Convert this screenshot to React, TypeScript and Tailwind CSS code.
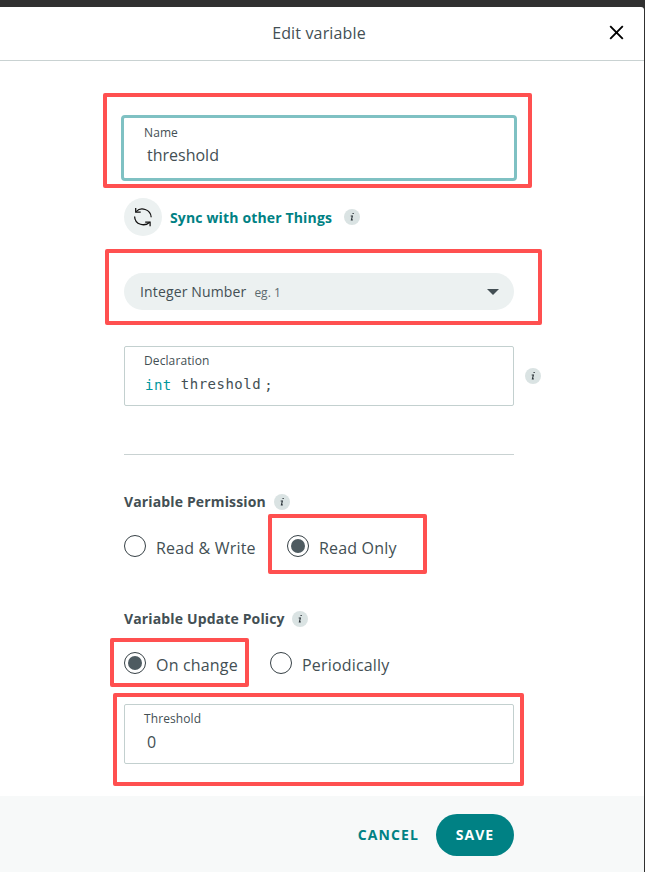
import React from "react";

function Info() {
  return (
    <span className="flex h-4 w-4 shrink-0 items-center justify-center rounded-full bg-[#dae3e3]">
      <svg width="16" height="16" viewBox="0 0 16 16" fill="none" stroke="#2c353a">
        <path d="M8.5 4.5h1.3" strokeWidth="1.1" />
        <path d="M6.7 7h1.7L7.4 10.9h1.4" strokeWidth="1.1" />
      </svg>
    </span>
  );
}

function Radio({ label, checked, className }: { label: string; checked?: boolean; className: string }) {
  return (
    <label className={"flex items-start whitespace-nowrap " + className}>
      <span className="flex h-[22px] w-[22px] shrink-0 items-center justify-center rounded-full border border-[#374146] bg-white">
        {checked && <span className="h-3.5 w-3.5 rounded-full bg-[#4e5b61]" />}
      </span>
      <span className="ml-2.5 mt-0.5 text-base leading-[22px] tracking-[0.18px]">{label}</span>
    </label>
  );
}

function Highlight({ className }: { className: string }) {
  return <div className={"pointer-events-none absolute rounded-[2px] border-4 border-[#ff5050] " + className} />;
}

export default function App() {
  return (
    <div className="relative flex h-[872px] w-[645px] flex-col overflow-hidden bg-[#303030] pr-px pt-[7px] font-['Open_Sans','Noto_Sans',sans-serif] text-[#434f54]">
      <div className="flex min-h-0 flex-1 flex-col overflow-hidden rounded-tr-[3px] bg-white">
        <header className="grid h-[54px] shrink-0 grid-cols-[1fr_auto_1fr] items-center border-b border-[#c9d2d2] pr-5">
          <span />
          <h1 className="mb-0.5 ml-[14px] whitespace-nowrap text-base tracking-[0.15px]">Edit variable</h1>
          <svg className="mb-0.5 justify-self-end" width="15" height="15" viewBox="0 0 15 15" fill="none" stroke="#000" strokeWidth="1.9">
            <path d="M1.2 1.2 13.8 13.8M13.8 1.2 1.2 13.8" />
          </svg>
        </header>

        <main className="flex h-[735px] shrink-0 flex-col pl-[124px]">
          <div className="-ml-[3px] mt-[54px] flex h-[66px] w-[396px] shrink-0 flex-col rounded-[4px] border-[3px] border-[#7fc1c3] pl-5 pt-[7px]">
            <span className="text-xs leading-4 tracking-[0.1px]">Name</span>
            <span className="ml-[3px] mt-0.5 text-base leading-6">threshold</span>
          </div>

          <div className="mt-[17px] flex h-[38px] shrink-0 items-center">
            <span className="flex h-[38px] w-[38px] items-center justify-center rounded-full bg-[#ecf1f1]">
              <svg width="20" height="20" viewBox="0 0 20 20" fill="none" stroke="#111" strokeWidth="1.25">
                <path d="M3.2 4.6C7.8 -0.4 17.6 2.2 18.2 10.2" />
                <path d="M2.7 0.9v4.1h5" />
                <path d="M1.6 9.4c.3 8.6 10.3 10.4 15.2 5.8" />
                <path d="M12.2 15.2h4.9v4.1" />
              </svg>
            </span>
            <span className="ml-2 mt-0.5 w-[174px] whitespace-nowrap text-sm font-bold tracking-[0.15px] text-[#008184]">Sync with other Things</span>
            <Info />
          </div>

          <div className="mt-[37px] flex h-[37px] w-[390px] shrink-0 items-center rounded-full bg-[#ecf1f1] pl-4 pr-[15px]">
            <span className="whitespace-nowrap text-sm tracking-[0.14px]">Integer Number</span>
            <span className="ml-2 mt-0.5 flex-1 text-xs text-[#5d6a6f]">eg. 1</span>
            <svg width="12" height="6" viewBox="0 0 12 6" fill="#434f54">
              <path d="M0 0h12L6 6z" />
            </svg>
          </div>

          <div className="mt-9 flex items-center">
            <div className="flex h-[60px] w-[390px] shrink-0 flex-col rounded-[2px] border border-[#c3d0cf] pl-[19px] pt-[5px]">
              <span className="text-xs leading-[18px] tracking-[0.1px]">Declaration</span>
              <span className="ml-px mt-1 flex whitespace-pre font-['DejaVu_Sans_Mono',monospace] text-sm leading-5 tracking-[0.5px]">
                <span className="mt-px text-[#00979d]">int</span>
                <span className="ml-[9px]">threshold</span>
                <span className="ml-[3px] mt-px">;</span>
              </span>
            </div>
            <span className="ml-[11px]">
              <Info />
            </span>
          </div>

          <div className="mt-12 h-px w-[390px] shrink-0 bg-[#c9d2d2]" />

          <section className="mt-[39px] shrink-0">
            <div className="flex h-4 items-center whitespace-nowrap text-sm font-bold tracking-[0.14px]">
              <span className="w-[150px]">Variable Permission</span>
              <Info />
            </div>
            <div className="mt-[25px] flex h-6">
              <Radio label="Read & Write" className="w-[163px]" />
              <Radio label="Read Only" checked className="" />
            </div>
          </section>

          <section className="mt-[52px] shrink-0">
            <div className="flex h-4 items-center whitespace-nowrap text-sm font-bold tracking-[0.14px]">
              <span className="w-[168px]">Variable Update Policy</span>
              <Info />
            </div>
            <div className="mt-[25px] flex h-6">
              <Radio label="On change" checked className="w-[146px]" />
              <Radio label="Periodically" className="" />
            </div>
          </section>

          <div className="mt-7 flex h-[60px] w-[390px] shrink-0 flex-col rounded-[2px] border border-[#c3d0cf] pl-[19px] pt-1.5">
            <span className="text-xs leading-4 tracking-[0.1px]">Threshold</span>
            <span className="ml-[3px] mt-[3px] text-base leading-6">0</span>
          </div>
        </main>

        <footer className="flex flex-1 items-start justify-end bg-[#f7f9f9] pr-[130px] pt-[18px] text-sm font-bold tracking-[1px]">
          <button className="mr-[17px] h-[42px] text-[#008184] tracking-[1.1px]">CANCEL</button>
          <button className="h-[42px] w-[78px] rounded-full bg-[#008184] text-white">SAVE</button>
        </footer>
      </div>

      <Highlight className="left-[103px] top-[93px] h-[95px] w-[429px]" />
      <Highlight className="left-[105px] top-[249px] h-[76px] w-[437px]" />
      <Highlight className="left-[268px] top-[514px] h-[60px] w-[159px]" />
      <Highlight className="left-[110px] top-[638px] h-[49px] w-[139px]" />
      <Highlight className="left-[113px] top-[693px] h-[93px] w-[411px]" />
    </div>
  );
}
